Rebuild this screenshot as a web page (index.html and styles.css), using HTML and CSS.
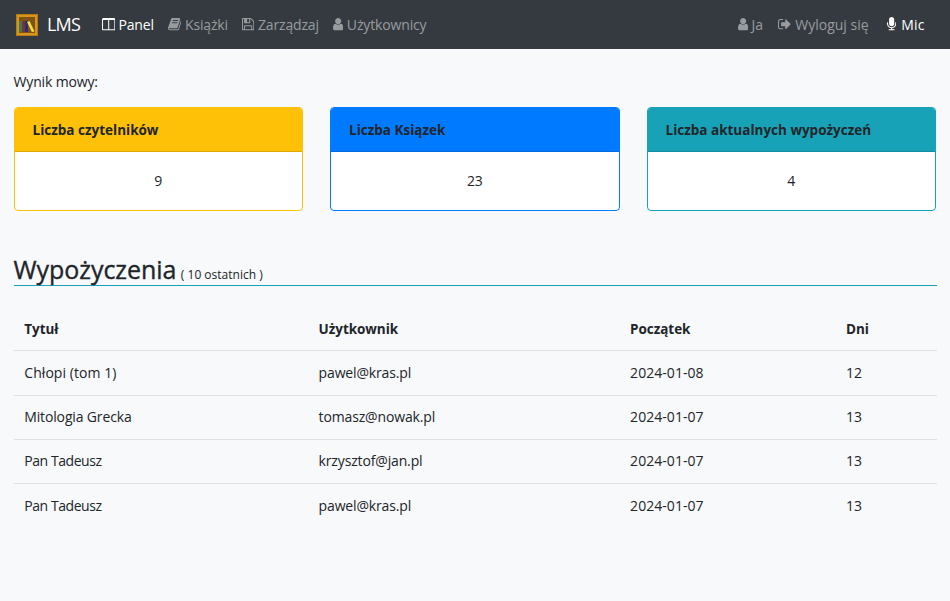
FILE: index.html
```html
<!DOCTYPE html>
<html lang="pl">
<head>
<meta charset="utf-8">
<title>LMS</title>
<link rel="stylesheet" href="styles.css">
</head>
<body>
<svg class="defs" aria-hidden="true">
  <symbol id="user" viewBox="256 0 1280 1792"><path d="M1536 1399q0 109-62.500 187t-150.500 78h-854q-88 0-150.500-78t-62.500-187q0-85 8.500-160.500t31.500-152 58.500-131 94-89 134.500-34.500q131 128 313 128t313-128q76 0 134.500 34.500t94 89 58.500 131 31.500 152 8.500 160.500zm-256-887q0 159-112.500 271.500t-271.500 112.500-271.500-112.500-112.500-271.500 112.500-271.500 271.500-112.500 271.500 112.500 112.500 271.500z"/></symbol>
</svg>
<nav class="navbar">
  <a class="brand">
    <svg class="logo" viewBox="0 0 22 22">
      <rect width="22" height="22" fill="#b87a14"/>
      <rect x="1" y="1" width="20" height="20" fill="#d8951b"/>
      <rect x="3" y="3" width="16" height="16" fill="#7d5414"/>
      <rect x="3" y="7" width="3" height="11" fill="#3f7a50"/>
      <rect x="6" y="7" width="3" height="11" fill="#7b3434"/>
      <rect x="9" y="7" width="3" height="11" fill="#2c2f78"/>
      <path d="M11 8l2.500-1 5 10.500-2.600.5z" fill="#f4df3e"/>
    </svg>
    <span>LMS</span>
  </a>
  <a class="link active"><svg class="icon columns" viewBox="0 0 1664 1792"><path d="M160 1536h608v-1152h-640v1120q0 13 9.500 22.500t22.500 9.500zm1376-32v-1120h-640v1152h608q13 0 22.500-9.500t9.500-22.500zm128-1216v1216q0 66-47 113t-113 47h-1344q-66 0-113-47t-47-113v-1216q0-66 47-113t113-47h1344q66 0 113 47t47 113z"/></svg><span>Panel</span></a>
  <a class="link"><svg class="icon book" viewBox="64 0 1664 1792"><path d="M1703 478q40 57 18 129l-275 906q-19 64-76.500 107.500t-122.500 43.500h-923q-77 0-148.500-53.500t-99.500-131.500q-24-67-2-127 0-4 3-27t4-37q1-8-3-21.500t-3-19.500q2-11 8-21t16.500-23.500 16.500-23.500q23-38 45-91.500t30-91.500q3-10 .5-30t-.5-28q3-11 17-28t17-23q21-36 42-92t25-90q1-9-2.500-32t.5-28q4-13 22-30.500t22-22.500q19-26 42.500-84.500t27.500-96.500q1-8-3-25.500t-2-26.500q2-8 9-18t18-23 17-21q8-12 16.500-30.500t15-35 16-36 19.500-32 26.500-23.500 36-11.500 47.500 5.500l-1 3q38-9 51-9h761q74 0 114 56t18 130l-274 906q-36 119-71.500 153.500t-128.500 34.500h-869q-27 0-38 15-11 16-1 43 24 70 144 70h923q29 0 56-15.500t35-41.500l300-987q7-22 5-57 38 15 59 43zm-1064 2q-4 13 2 22.500t20 9.500h608q13 0 25.500-9.500t16.500-22.500l21-64q4-13-2-22.500t-20-9.500h-608q-13 0-25.500 9.500t-16.500 22.500zm-83 256q-4 13 2 22.500t20 9.500h608q13 0 25.500-9.500t16.500-22.500l21-64q4-13-2-22.500t-20-9.500h-608q-13 0-25.500 9.500t-16.500 22.500z"/></svg><span>Książki</span></a>
  <a class="link"><svg class="icon floppy" viewBox="128 0 1536 1792"><path d="M512 1536h768v-384h-768v384zm896 0h128v-896q0-14-10-38.500t-20-34.500l-281-281q-10-10-34-20t-39-10v416q0 40-28 68t-68 28h-576q-40 0-68-28t-28-68v-416h-128v1280h128v-416q0-40 28-68t68-28h832q40 0 68 28t28 68v416zm-384-928v-320q0-13-9.500-22.500t-22.500-9.500h-192q-13 0-22.500 9.500t-9.500 22.500v320q0 13 9.500 22.500t22.500 9.500h192q13 0 22.500-9.500t9.500-22.500zm640 32v928q0 40-28 68t-68 28h-1344q-40 0-68-28t-28-68v-1344q0-40 28-68t68-28h928q40 0 88 20t76 48l280 280q28 28 48 76t20 88z"/></svg><span>Zarządzaj</span></a>
  <a class="link"><svg class="icon person"><use href="#user"/></svg><span>Użytkownicy</span></a>
  <a class="link right"><svg class="icon person"><use href="#user"/></svg><span>Ja</span></a>
  <a class="link logout"><svg class="icon signout" viewBox="64 0 1664 1792"><path d="M704 1440q0 4 1 20t.5 26.500-3 23.500-10 19.500-20.500 6.500h-320q-119 0-203.500-84.500t-84.500-203.500v-704q0-119 84.500-203.500t203.500-84.500h320q13 0 22.500 9.500t9.500 22.500q0 4 1 20t.5 26.500-3 23.500-10 19.500-20.500 6.500h-320q-66 0-113 47t-47 113v704q0 66 47 113t113 47h312l11.500 1 11.500 3 8 5.500 7 9 2 13.500zm928-544q0 26-19 45l-544 544q-19 19-45 19t-45-19-19-45v-288h-448q-26 0-45-19t-19-45v-384q0-26 19-45t45-19h448v-288q0-26 19-45t45-19 45 19l544 544q19 19 19 45z"/></svg><span>Wyloguj się</span></a>
  <a class="link active mic"><svg class="icon microphone" viewBox="320 0 1152 1792"><path d="M1472 704v128q0 221-147.500 384.500t-364.500 187.500v132h256q26 0 45 19t19 45-19 45-45 19h-640q-26 0-45-19t-19-45 19-45 45-19h256v-132q-217-24-364.500-187.500t-147.500-384.500v-128q0-26 19-45t45-19 45 19 19 45v128q0 185 131.500 316.500t316.500 131.500 316.500-131.500 131.500-316.500v-128q0-26 19-45t45-19 45 19 19 45zm-256-384v512q0 132-94 226t-226 94-226-94-94-226v-512q0-132 94-226t226-94 226 94 94 226z"/></svg><span>Mic</span></a>
</nav>
<main class="content">
  <p class="speech">Wynik mowy:</p>
  <section class="cards">
    <article class="card warning"><h2 class="card-head">Liczba czytelników</h2><p class="card-body">9</p></article>
    <article class="card primary"><h2 class="card-head">Liczba Ksiązek</h2><p class="card-body">23</p></article>
    <article class="card info"><h2 class="card-head">Liczba aktualnych wypożyczeń</h2><p class="card-body">4</p></article>
  </section>
  <h1 class="title">Wypożyczenia<small class="note">( 10 ostatnich )</small></h1>
  <table class="loans">
    <colgroup><col class="c1"><col class="c2"><col class="c3"><col class="c4"></colgroup>
    <thead><tr><th>Tytuł</th><th>Użytkownik</th><th>Początek</th><th>Dni</th></tr></thead>
    <tbody>
      <tr><td class="num">Chłopi (tom 1)</td><td>pawel@kras.pl</td><td class="num">2024-01-08</td><td>12</td></tr>
      <tr><td>Mitologia Grecka</td><td>tomasz@nowak.pl</td><td class="num">2024-01-07</td><td>13</td></tr>
      <tr><td class="tight">Pan Tadeusz</td><td>krzysztof@jan.pl</td><td class="num">2024-01-07</td><td>13</td></tr>
      <tr><td class="tight">Pan Tadeusz</td><td>pawel@kras.pl</td><td class="num">2024-01-07</td><td>13</td></tr>
    </tbody>
  </table>
</main>
</body>
</html>
```
FILE: styles.css
```css
* { box-sizing: border-box; }
body { margin: 0; background: #f8f9fb; color: #212529; font: 14px/21.6px "Open Sans", "Noto Sans", sans-serif; letter-spacing: -.15px; }
.defs { position: absolute; width: 0; height: 0; }
.navbar { display: flex; align-items: center; height: 49px; padding: 0 25.500px 0 16px; background: #343a40; }
.brand { display: flex; align-items: center; color: #fff; font-size: 18px; letter-spacing: -.8px; gap: 9px; margin-right: 21.500px; }
.logo { width: 22px; height: 22px; }
.link { display: flex; align-items: center; gap: 3.500px; margin-right: 14.200px; color: #999c9f; white-space: nowrap; }
.link.active { color: #fff; }
.link.right { margin-left: auto; margin-right: 15.500px; }
.link.logout { margin-right: 18.500px; letter-spacing: 0; }
.link.mic { margin: 0; gap: 5px; letter-spacing: .1px; }
.icon { height: 14.400px; fill: currentColor; flex: none; }
.columns, .book, .signout { width: 13.400px; }
.floppy { width: 12.300px; }
.person { width: 10.300px; }
.microphone { width: 9.300px; }
.content { padding: 22px 13px 0 13.500px; }
.speech { margin: 0 0 14px; }
.cards { display: grid; grid-template-columns: repeat(3, 289.500px); gap: 27px; }
.card { border: 1px solid; border-radius: 4px; background: #fff; height: 104px; overflow: hidden; }
.card-head { margin: 0; height: 44px; padding: 12px 18px 0; font-size: 13.500px; letter-spacing: 0; font-weight: 700; color: #212529; border-bottom: 1px solid rgba(0,0,0,.125); }
.card-body { margin: 0; padding: 18px 0; text-align: center; color: #212529; }
.warning { border-color: #ffc107; }
.warning .card-head { background-color: #ffc107; }
.primary { border-color: #007bff; }
.primary .card-head { background-color: #007bff; }
.info { border-color: #17a2b8; }
.info .card-head { background-color: #17a2b8; }
.title { margin: 43px 0 0; height: 32px; line-height: 31px; font-size: 25px; letter-spacing: -.05px; font-weight: 500; -webkit-text-stroke: .35px #212529; border-bottom: 1px solid #17a2b8; white-space: nowrap; }
.note { margin-left: 4.500px; font-size: 12px; letter-spacing: 0; font-weight: 400; -webkit-text-stroke: 0; }
.loans { width: 923.500px; margin-top: 21px; border-collapse: collapse; table-layout: fixed; }
.c1 { width: 294.300px; } .c2 { width: 311.500px; } .c3 { width: 216px; }
.loans th, .loans td { height: 44.300px; padding: 0 10.800px 1px; text-align: left; }
.loans th { padding-top: 3px; padding-bottom: 0; font-size: 13.500px; letter-spacing: -.05px; }
.loans .num { letter-spacing: .05px; }
.loans .tight { letter-spacing: -.45px; }
.loans tbody td { border-top: 1px solid #dee2e6; }
```
